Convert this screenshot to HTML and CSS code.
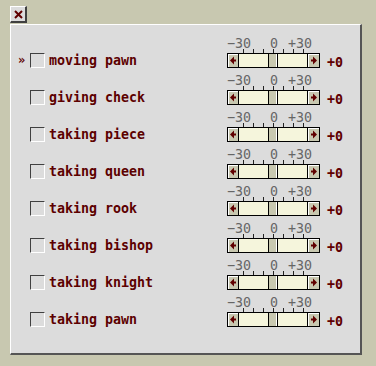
FILE: index.html
```html
<!DOCTYPE html>
<html lang="en">
<head>
  <meta charset="UTF-8">
  <title>Piece Weights</title>
  <link rel="stylesheet" href="styles.css">
</head>
<body>
  <button class="close-btn" title="Close">
    <svg width="9" height="9" viewBox="0 0 9 9"><path d="M1 1 L8 8 M8 1 L1 8" stroke="#600000" stroke-width="2"/></svg>
  </button>
  <div class="panel" id="panel"></div>

  <script>
    const items = [
      "moving pawn",
      "giving check",
      "taking piece",
      "taking queen",
      "taking rook",
      "taking bishop",
      "taking knight",
      "taking pawn"
    ];

    const leftArrow = '<svg width="7" height="9" viewBox="0 0 7 9"><path d="M0 4.5 L4 0.5 L4 8.5 Z" fill="#600000"/><rect x="4" y="3.5" width="2" height="2" fill="#600000"/></svg>';
    const rightArrow = '<svg width="7" height="9" viewBox="0 0 7 9"><path d="M7 4.5 L3 0.5 L3 8.5 Z" fill="#600000"/><rect x="1" y="3.5" width="2" height="2" fill="#600000"/></svg>';

    // Build one row per weight
    const panel = document.getElementById("panel");
    items.forEach((name, i) => {
      const row = document.createElement("div");
      row.className = "row";
      row.innerHTML =
        '<span class="marker">' + (i === 0 ? "»" : "") + '</span>' +
        '<span class="check"></span>' +
        '<span class="label">' + name + '</span>' +
        '<div class="slider">' +
          '<div class="scale-labels"><span class="lbl-min">−30</span><span class="lbl-mid">0</span><span class="lbl-max">+30</span></div>' +
          '<div class="ticks"></div>' +
          '<div class="bar">' +
            '<span class="arrow left">' + leftArrow + '</span>' +
            '<span class="track"></span>' +
            '<span class="thumb"></span>' +
            '<span class="track"></span>' +
            '<span class="arrow right">' + rightArrow + '</span>' +
          '</div>' +
        '</div>' +
        '<span class="value">+0</span>';
      panel.appendChild(row);
    });
  </script>
</body>
</html>
```

FILE: styles.css
```css
/* General */
body {
  margin: 0;
  height: 366px;
  overflow: hidden;
  background: #c8c8b0;
  font-family: "DejaVu Sans Mono", "Liberation Mono", monospace;
  font-size: 13.3px;
}

.close-btn {
  display: flex;
  align-items: center;
  justify-content: center;
  margin: 6px 0 0 10px;
  width: 17px;
  height: 17px;
  padding: 0;
  box-sizing: border-box;
  background: #dcdcdc;
  border-style: solid;
  border-width: 1px 2px 2px 1px;
  border-color: #fff #404040 #404040 #fff;
}

.panel {
  margin: 1px 0 0 10px;
  width: 352px;
  box-sizing: border-box;
  padding: 6px 0 26px;
  background: #dcdcdc;
  border-style: solid;
  border-width: 1px 2px 2px 1px;
  border-color: #fff #555 #555 #fff;
}

/* Rows */
.row {
  display: flex;
  align-items: flex-end;
  height: 37px;
  padding-left: 7px;
}

.marker {
  width: 12px;
  line-height: 15px;
  font-size: 12px;
  font-weight: bold;
  color: #600000;
}

.check {
  width: 15px;
  height: 15px;
  box-sizing: border-box;
  border: 1px solid;
  border-color: #404040 #fff #fff #404040;
  margin-right: 4px;
}

.label {
  flex: 1;
  line-height: 15px;
  font-weight: bold;
  color: #5c0000;
}

/* Slider */
.slider {
  width: 93px;
}

.scale-labels {
  display: flex;
  height: 18px;
  line-height: 13px;
  padding-top: 6px;
  box-sizing: border-box;
  color: #666;
}

.scale-labels span {
  display: inline-block;
  text-align: center;
}

.lbl-min { width: 24px; }
.lbl-mid { width: 10px; margin-left: 18px; }
.lbl-max { width: 24px; margin-left: 9px; }

.ticks {
  margin-left: 16px;
  width: 61px;
  height: 4px;
  background: repeating-linear-gradient(to right, #222 0 1px, transparent 1px 10px);
}

.bar {
  display: flex;
  height: 15px;
  box-sizing: border-box;
  border: 1px solid #000;
  background: #f5f5dc;
}

.arrow {
  display: flex;
  align-items: center;
  justify-content: center;
  box-sizing: border-box;
  background: #c8c8b0;
  box-shadow: inset 1px 1px #fff;
}

.arrow.left {
  width: 11px;
  border-right: 1px solid #000;
}

.arrow.right {
  width: 12px;
  border-left: 1px solid #000;
}

.track {
  flex: 1;
}

.thumb {
  width: 10px;
  box-sizing: border-box;
  border-left: 1px solid #000;
  border-right: 1px solid #000;
  background: #c8c8b0;
  box-shadow: inset -1px 0 #fff;
}

.value {
  margin-left: 7px;
  width: 33px;
  line-height: 11px;
  font-weight: bold;
  color: #600000;
}
```
